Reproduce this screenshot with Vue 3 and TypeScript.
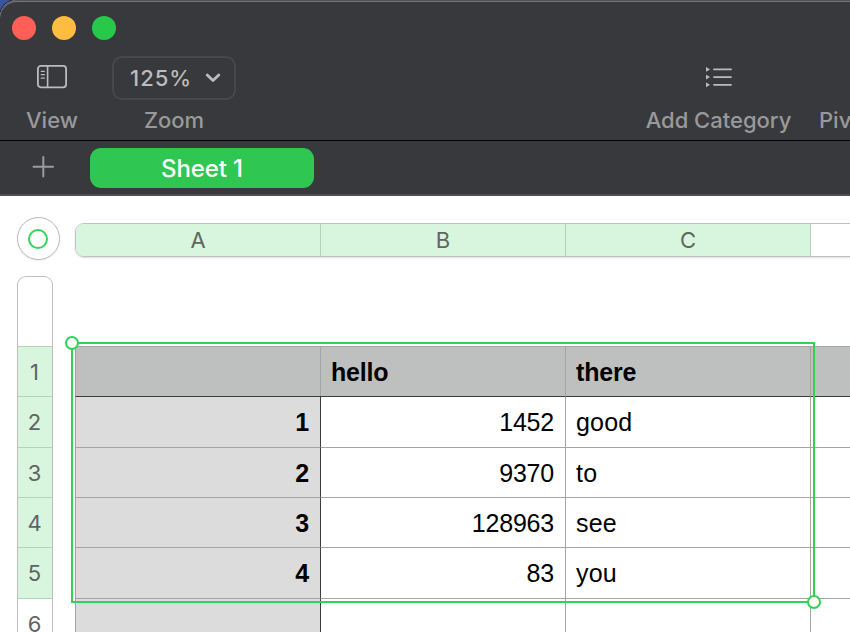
<script setup lang="ts">
interface Row {
  id: number
  height: number
  selected: boolean
  cells: string[]
}

const columns: string[] = ['A', 'B', 'C']
const rows: Row[] = [
  { id: 1, height: 50, selected: true, cells: ['', 'hello', 'there', ''] },
  { id: 2, height: 51, selected: true, cells: ['1', '1452', 'good', ''] },
  { id: 3, height: 50, selected: true, cells: ['2', '9370', 'to', ''] },
  { id: 4, height: 50, selected: true, cells: ['3', '128963', 'see', ''] },
  { id: 5, height: 51, selected: true, cells: ['4', '83', 'you', ''] },
  { id: 6, height: 50, selected: false, cells: ['', '', '', ''] },
]
const isNumber = (value: string): boolean => /^\d+$/.test(value)
</script>

<template>
  <div class="desktop">
    <div class="window">
      <header class="toolbar">
        <div class="lights">
          <span class="light close"></span>
          <span class="light minimise"></span>
          <span class="light expand"></span>
        </div>
        <div class="tools">
          <div class="tool view">
            <div class="tool-icon">
              <svg width="32" height="26" viewBox="0 0 32 26" fill="none" stroke="#bcbcbf">
                <rect x="1.9" y="1.9" width="28.2" height="21.4" rx="3" stroke-width="1.8" />
                <path d="M11.6 2v21.2" stroke-width="1.6" />
                <path d="M4.8 7.3h4M4.8 10.7h4M4.8 14.1h4" stroke-width="1.3" />
              </svg>
            </div>
            <span class="label">View</span>
          </div>
          <div class="tool zoom">
            <div class="zoom-box">
              <span>125%</span>
              <svg width="16" height="12" viewBox="0 0 16 12" fill="none" stroke="#bcbcbf" stroke-width="2.8" stroke-linecap="round" stroke-linejoin="round">
                <path d="M2.2 3l5.8 5.6L13.8 3" />
              </svg>
            </div>
            <span class="label">Zoom</span>
          </div>
          <div class="tool category">
            <div class="tool-icon">
              <svg width="28" height="22" viewBox="0 0 28 22" fill="#bcbcbf">
                <path d="M1 1l4 2.4L1 5.8zM1 8.7l4 2.4-4 2.4zM1 16.4l4 2.4-4 2.4z" />
                <path d="M9 3.4h17M9 11.1h17M9 18.8h17" stroke="#bcbcbf" stroke-width="1.8" stroke-linecap="round" />
              </svg>
            </div>
            <span class="label">Add Category</span>
          </div>
          <div class="tool pivot"><span class="label">Pivot Table</span></div>
        </div>
      </header>

      <nav class="tabs">
        <svg class="add" width="22" height="22" viewBox="0 0 22 22" stroke="#9b9b9d" stroke-width="2" stroke-linecap="round">
          <path d="M11.3 1v19.6M1.5 10.8h19.6" />
        </svg>
        <div class="tab">Sheet 1</div>
      </nav>

      <main class="canvas">
        <div class="top-band">
          <div class="table-handle"><span></span></div>
          <div class="column-bar">
            <div v-for="column in columns" :key="column" class="column">{{ column }}</div>
            <div class="column rest"></div>
          </div>
        </div>
        <div class="body">
          <div class="row-bar">
            <div class="row-spacer"></div>
            <div v-for="row in rows" :key="row.id" class="row-head" :class="{ selected: row.selected }" :style="{ height: row.height + 'px' }">{{ row.id }}</div>
          </div>
          <div class="table">
            <div v-for="(row, r) in rows" :key="row.id" class="row" :class="{ header: r === 0, first: r === 1 }" :style="{ height: row.height + 'px' }">
              <div v-for="(cell, c) in row.cells" :key="c" class="cell" :class="{ side: c === 0, number: isNumber(cell), edge: c === 1 }">{{ cell }}</div>
            </div>
            <div class="selection">
              <i class="knob start"></i>
              <i class="knob end"></i>
            </div>
          </div>
        </div>
      </main>
    </div>
  </div>
</template>

<style>
body { margin: 0; overflow: hidden; }
</style>

<style scoped>
* { box-sizing: border-box; }
.desktop { width: 850px; height: 632px; overflow: hidden; background: #3a559b; font-family: Inter, "Liberation Sans", sans-serif; }
.window { width: 880px; height: 640px; border-radius: 17px 0 0 0; overflow: hidden; background: #fff; box-shadow: 0 0 0 1px #17203a; }
.toolbar { height: 141px; background: #38393c; border-bottom: 1px solid #000; box-shadow: inset 0 1px #505154, inset 0 2px #77787a; border-radius: 17px 0 0 0; padding: 16px 0 0; }
.lights { display: flex; gap: 16px; padding-left: 12px; height: 40px; }
.light { width: 24px; height: 24px; border-radius: 50%; }
.close { background: #ff5f57; }
.minimise { background: #febc40; }
.expand { background: #28c84b; }
.tools { display: flex; height: 84px; }
.tool { display: flex; flex-direction: column; align-items: center; flex: none; }
.view { width: 104px; }
.zoom { width: 140px; }
.category { margin-left: 388px; width: 172px; padding-left: 1px; }
.pivot { margin-left: 15px; padding-top: 44px; }
.tool-icon { flex: none; height: 44px; padding-top: 8px; }
.category .tool-icon { padding-top: 10px; }
.zoom-box { flex: none; width: 124px; height: 44px; border: 2px solid #47484b; border-radius: 10px; display: flex; align-items: center; justify-content: space-between; padding: 0 13px 0 16px; color: #bcbcbf; font-size: 22px; font-weight: 500; letter-spacing: 1px; }
.label { color: #99999b; font-size: 22px; line-height: 40px; font-weight: 500; letter-spacing: 0; white-space: nowrap; }
.tabs { height: 55px; background: #38393c; border-bottom: 2px solid #4f4f53; display: flex; align-items: flex-start; padding: 7px 0 0 32px; }
.add { margin: 8px 36px 0 0; }
.tab { width: 224px; height: 40px; border-radius: 11px; background: #2fc751; color: #fff; font-size: 24px; font-weight: 500; line-height: 41px; text-align: center; letter-spacing: -0.1px; }
.canvas { padding: 20px 0 0 16px; }
.top-band { display: flex; height: 60px; }
.table-handle { width: 43px; height: 43px; margin: 1px 0 0 0.5px; border: 1px solid #b7b7b8; border-radius: 50%; display: flex; align-items: center; justify-content: center; box-shadow: 0 1px 2px #0001; }
.table-handle span { width: 20px; height: 20px; border: 2px solid #32d657; border-radius: 50%; }
.column-bar { display: flex; margin: 7px 0 0 15.5px; height: 34px; border: 1px solid #bfc1c0; border-radius: 9px 0 0 9px; overflow: hidden; box-shadow: 0 1px 2px #0002; }
.column { width: 245px; flex: none; background: #d8f5dd; border-right: 1px solid #b6d2ba; color: #606662; font-size: 22px; line-height: 32px; text-align: center; }
.column.rest { width: 60px; background: #fff; }
.body { display: flex; align-items: flex-start; padding-left: 1px; }
.row-bar { width: 36px; border: solid #bfc1c0; border-width: 1px 1px 0; border-radius: 9px 9px 0 0; overflow: hidden; }
.row-spacer { height: 69px; }
.row-head { display: flex; align-items: center; justify-content: center; border-top: 1px solid #d0d2d1; color: #606366; font-size: 22px; padding-right: 1px; }
.row-head.selected { background: #d8f5dd; border-color: #b6d2ba; }
.row-head.selected + .row-head:not(.selected) { border-color: #b6d2ba; }
.table { position: relative; margin: 70px 0 0 22px; font-family: "Liberation Sans", Arial, sans-serif; font-size: 25px; color: #000; }
.row { display: grid; grid-template-columns: 245px 245px 245px 60px; }
.cell { display: flex; align-items: center; border-left: 1px solid #a4a4a4; border-top: 1px solid #a4a4a4; padding: 1px 11px 0 10px; letter-spacing: 0.2px; }
.side { background: #dcdcdc; font-weight: 700; }
.edge { border-left-color: #3b3b3b; }
.number { justify-content: flex-end; letter-spacing: -0.2px; }
.header .cell { background: #bec0bf; border-color: #a4a5a5; font-weight: 700; letter-spacing: -0.2px; }
.first .cell { border-top-color: #3b3b3b; }
.selection { position: absolute; left: -4px; top: -4px; width: 744px; height: 261px; border: 2px solid #34d158; }
.knob { position: absolute; width: 14px; height: 14px; border: 2px solid #34d158; border-radius: 50%; background: #fff; }
.start { left: -8px; top: -8px; }
.end { right: -8px; bottom: -8px; }
</style>
